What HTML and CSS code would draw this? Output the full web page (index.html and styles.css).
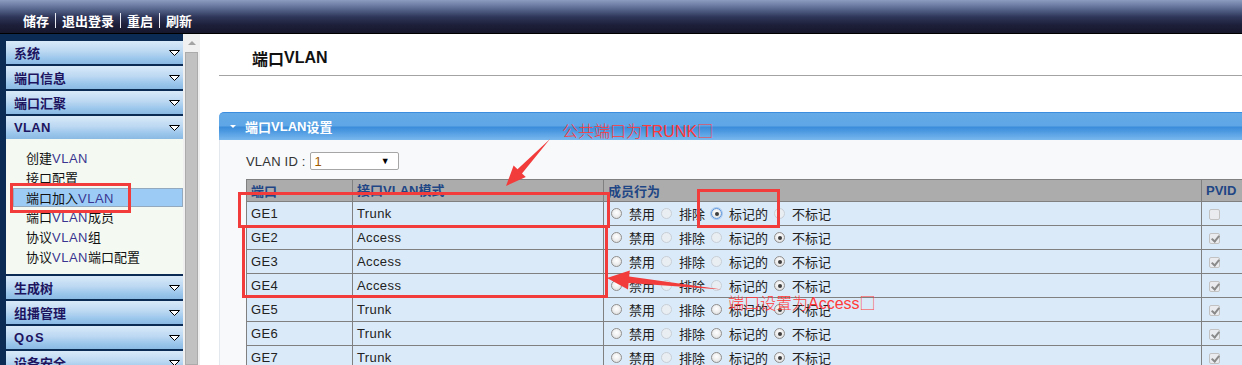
FILE: index.html
```html
<!DOCTYPE html>
<html lang="zh-CN">
<head>
<meta charset="utf-8">
<title>端口VLAN</title>
<link rel="stylesheet" href="styles.css">
</head>
<body>
<div class="page">
  <header class="topbar">
    <span class="tb-item">储存</span><span class="tb-sep"></span>
    <span class="tb-item">退出登录</span><span class="tb-sep"></span>
    <span class="tb-item">重启</span><span class="tb-sep"></span>
    <span class="tb-item">刷新</span>
  </header>
  <div class="main">
    <aside class="sidebar">
      <div class="menu-item"><span>系统</span><svg class="tri" viewBox="0 0 11 6"><path d="M0.5 0.5 H10.5 L5.5 5.5 Z" fill="#fff" stroke="#000"/></svg></div>
      <div class="menu-item"><span>端口信息</span><svg class="tri" viewBox="0 0 11 6"><path d="M0.5 0.5 H10.5 L5.5 5.5 Z" fill="#fff" stroke="#000"/></svg></div>
      <div class="menu-item"><span>端口汇聚</span><svg class="tri" viewBox="0 0 11 6"><path d="M0.5 0.5 H10.5 L5.5 5.5 Z" fill="#fff" stroke="#000"/></svg></div>
      <div class="menu-item"><span class="en-b">VLAN</span><svg class="tri" viewBox="0 0 11 6"><path d="M0.5 0.5 H10.5 L5.5 5.5 Z" fill="#fff" stroke="#000"/></svg></div>
      <div class="submenu">
        <div class="sub-item">创建<span class="en">VLAN</span></div>
        <div class="sub-item">接口配置</div>
        <div class="sub-item active">端口加入<span class="en">VLAN</span></div>
        <div class="sub-item">端口<span class="en">VLAN</span>成员</div>
        <div class="sub-item">协议<span class="en">VLAN</span>组</div>
        <div class="sub-item">协议<span class="en">VLAN</span>端口配置</div>
      </div>
      <div class="menu-item"><span>生成树</span><svg class="tri" viewBox="0 0 11 6"><path d="M0.5 0.5 H10.5 L5.5 5.5 Z" fill="#fff" stroke="#000"/></svg></div>
      <div class="menu-item"><span>组播管理</span><svg class="tri" viewBox="0 0 11 6"><path d="M0.5 0.5 H10.5 L5.5 5.5 Z" fill="#fff" stroke="#000"/></svg></div>
      <div class="menu-item"><span class="en-b qos">QoS</span><svg class="tri" viewBox="0 0 11 6"><path d="M0.5 0.5 H10.5 L5.5 5.5 Z" fill="#fff" stroke="#000"/></svg></div>
      <div class="menu-item"><span>设备安全</span><svg class="tri" viewBox="0 0 11 6"><path d="M0.5 0.5 H10.5 L5.5 5.5 Z" fill="#fff" stroke="#000"/></svg></div>
    </aside>
    <div class="scrollbar">
      <div class="sb-up"></div>
      <div class="sb-thumb"></div>
    </div>
    <section class="content">
      <h1 class="page-title">端口<span class="en-b">VLAN</span></h1>
      <div class="panel">
        <div class="panel-head"><span class="ph-tri"></span><span class="ph-title">端口<span class="en-b">VLAN</span>设置</span></div>
        <div class="panel-body">
          <div class="vlan-row">
            <span class="vlan-label">VLAN ID :</span>
            <div class="select"><span>1</span><span class="sel-arrow">▼</span></div>
          </div>
          <table class="grid">
            <thead>
              <tr><th class="c1">端口</th><th class="c2">接口<span class="en-b">VLAN</span>模式</th><th class="c3">成员行为</th><th class="c4"><span class="en-b">PVID</span></th></tr>
            </thead>
            <tbody id="rows"></tbody>
          </table>
        </div>
      </div>
    </section>
  </div>

  <div class="mark mark-menu"></div>
  <div class="mark mark-ge1"></div>
  <div class="mark mark-ge24"></div>
  <div class="mark mark-tag"></div>
  <div class="note note-trunk">公共端口为<span class="en-n">TRUNK</span>□</div>
  <div class="note note-access">端口设置为<span class="en-n">Access</span>□</div>
  <svg class="arrows" width="1242" height="365" viewBox="0 0 1242 365">
    <polygon fill="#f23c3c" points="550,139 522,173.4 525.8,177 506,186 513.6,165.6 517.5,169.2"/>
    <polygon fill="#f23c3c" points="722,289.5 629.2,276.6 629.8,270.5 607,278 628,289.5 628.6,283"/>
  </svg>
</div>
<script src="app.js"></script>
</body>
</html>
```

FILE: app.js
```js
(function () {
  var rows = [
    { port: 'GE1', mode: 'Trunk', sel: 2, tagDis: false, untagDis: true, pvid: false, focus: true },
    { port: 'GE2', mode: 'Access', sel: 3, tagDis: true, untagDis: false, pvid: true },
    { port: 'GE3', mode: 'Access', sel: 3, tagDis: true, untagDis: false, pvid: true },
    { port: 'GE4', mode: 'Access', sel: 3, tagDis: true, untagDis: false, pvid: true },
    { port: 'GE5', mode: 'Trunk', sel: 3, tagDis: false, untagDis: false, pvid: true },
    { port: 'GE6', mode: 'Trunk', sel: 3, tagDis: false, untagDis: false, pvid: true },
    { port: 'GE7', mode: 'Trunk', sel: 3, tagDis: false, untagDis: false, pvid: true }
  ];
  var labels = ['禁用', '排除', '标记的', '不标记'];
  var tb = document.getElementById('rows');
  rows.forEach(function (r) {
    var tr = document.createElement('tr');
    var html = '<td class="c1">' + r.port + '</td><td class="c2">' + r.mode + '</td><td class="c3"><div class="opts">';
    labels.forEach(function (l, i) {
      var cls = 'radio';
      if (i === 1) cls += ' dis';
      if (i === 2 && r.tagDis) cls += ' dis';
      if (i === 3 && r.untagDis) cls += ' dis';
      if (i === r.sel) cls += ' on';
      if (i === r.sel && r.focus) cls += ' focus';
      html += '<span class="opt"><span class="' + cls + '"></span><span class="opt-l">' + l + '</span></span>';
    });
    html += '</div></td><td class="c4"><span class="chk' + (r.pvid ? ' on' : '') + '"></span></td>';
    tr.innerHTML = html;
    tb.appendChild(tr);
  });
})();
```

FILE: styles.css
```css
* { box-sizing: border-box; }
html, body { margin: 0; padding: 0; }
body {
  width: 1242px;
  height: 365px;
  overflow: hidden;
  background: #fff;
  font-family: "Liberation Sans", "Noto Sans CJK SC", Arial, sans-serif;
  font-size: 13px;
  color: #222;
}
.page { position: relative; width: 1242px; height: 365px; overflow: hidden; }

/* top bar */
.topbar {
  height: 34px;
  display: flex;
  align-items: center;
  padding: 8px 0 0 23px;
  background: linear-gradient(#8c9cc0 0, #5d6d94 8px, #2e3659 17px, #1d1f3a 25px, #16172c 33px);
  border-bottom: 1px solid #000;
}
.tb-item {
  font-family: "Noto Sans CJK SC", sans-serif;
  font-weight: 700;
  font-size: 13px;
  color: #fff;
  line-height: 16px;
}
.tb-sep {
  width: 1px;
  height: 15px;
  background: #e8e8f0;
  margin: 0 6px 0 6px;
}

.main { display: flex; height: 331px; }

/* sidebar */
.sidebar {
  width: 183px;
  flex: none;
  background: #0b2b55;
  padding: 7px 0 0 6px;
  display: flex;
  flex-direction: column;
  gap: 2px;
}
.menu-item {
  height: 23px;
  flex: none;
  display: flex;
  align-items: center;
  justify-content: space-between;
  padding: 0 3px 0 8px;
  background: linear-gradient(#d9eaf9 0, #bcd8f2 45%, #9cc7ec 75%, #8ab9e3 100%);
  font-family: "Noto Sans CJK SC", sans-serif;
  font-weight: 700;
  font-size: 13px;
  color: #1d1460;
}
.menu-item .en-b { font-family: "Liberation Sans", sans-serif; font-weight: 700; letter-spacing: 0.3px; }
.menu-item .qos { letter-spacing: 1.5px; }
.tri { width: 11px; height: 6px; display: block; }
.submenu {
  height: 135px;
  flex: none;
  margin-top: -2px;
  background: #f4faf1;
  padding: 9px 0 0 0;
  display: flex;
  flex-direction: column;
}
.sub-item {
  height: 20px;
  line-height: 20px;
  padding-left: 20px;
  font-family: "Noto Sans CJK SC", sans-serif;
  font-size: 13px;
  color: #111;
}
.sub-item .en { font-family: "Liberation Sans", sans-serif; color: #3a3590; letter-spacing: 0.5px; }
.sub-item.active {
  height: 19px;
  line-height: 17px;
  margin-left: 7px;
  padding-left: 12px;
  background: #9cccf6;
  border: 1px solid #93a9be;
}

/* scrollbar */
.scrollbar {
  width: 17px;
  flex: none;
  background: #f0f0f0;
  display: flex;
  flex-direction: column;
  align-items: center;
}
.sb-up {
  margin-top: 7px;
  width: 0; height: 0;
  border-left: 4px solid transparent;
  border-right: 4px solid transparent;
  border-bottom: 4px solid #a3a3a3;
}
.sb-thumb {
  margin-top: 7px;
  width: 13px;
  flex: 1;
  background: #c1c1c1;
  border: 1px solid #ababab;
}

/* content */
.content { flex: 1; min-width: 0; overflow: hidden; }
.page-title {
  margin: 0 0 0 19px;
  height: 42px;
  padding: 12px 0 6px 33px;
  display: flex;
  align-items: center;
  border-bottom: 1px solid #a3a3a3;
  font-family: "Noto Sans CJK SC", sans-serif;
  font-size: 16px;
  line-height: 22px;
  font-weight: 700;
  color: #111;
}
.page-title .en-b { font-family: "Liberation Sans", sans-serif; }

.panel { margin: 36px 0 0 19px; width: 1080px; }
.panel-head {
  height: 28px;
  border-radius: 5px 0 0 0;
  border-top: 1px solid #3b8de0;
  background: linear-gradient(#64aae7 0, #5ea6e6 48%, #3a8cda 52%, #4f9be2 70%, #79b8ee 100%);
  display: flex;
  align-items: center;
  padding-left: 11px;
  color: #fff;
}
.ph-tri {
  width: 0; height: 0;
  border-left: 3px solid transparent;
  border-right: 3px solid transparent;
  border-top: 3px solid #fff;
  margin-right: 9px;
}
.ph-title {
  display: flex;
  align-items: center;
  height: 20px;
  font-family: "Noto Sans CJK SC", sans-serif;
  font-weight: 700;
  font-size: 13px;
}
.ph-title .en-b { font-family: "Liberation Sans", sans-serif; }
.panel-body {
  background: #f7f9fb;
  border-left: 1px solid #e3e8ee;
  padding: 12px 0 0 26px;
  height: 240px;
}
.vlan-row { display: flex; align-items: center; height: 18px; }
.vlan-label { color: #333; font-size: 13px; margin-right: 4px; letter-spacing: 0.2px; }
.select {
  width: 89px;
  height: 18px;
  background: #fff;
  border: 1px solid #a6a6a6;
  border-radius: 2px;
  display: flex;
  align-items: center;
  justify-content: space-between;
  padding: 0 8px 0 4px;
  color: #a05a00;
  font-size: 13px;
}
.sel-arrow { color: #000; font-size: 9px; }

.grid {
  margin-top: 9px;
  border-collapse: collapse;
  table-layout: fixed;
  width: 1015px;
}
.grid th, .grid td {
  border: 1px solid #808080;
  padding: 0 0 0 4px;
  text-align: left;
  white-space: nowrap;
  overflow: hidden;
}
.grid th {
  height: 22px;
  background: #acacac;
  color: #1f4685;
  font-family: "Noto Sans CJK SC", sans-serif;
  font-weight: 700;
  font-size: 13px;
  line-height: 18px;
}
.grid th .en-b { font-family: "Liberation Sans", sans-serif; }
.grid td {
  height: 24px;
  background: #dbeaf8;
  font-size: 13px;
  line-height: 18px;
  color: #222;
  letter-spacing: 0.4px;
}
.c1 { width: 106px; }
.c2 { width: 251px; }
.c3 { width: 598px; }
.c4 { width: 60px; }
.grid td.c3 { padding-left: 7px; }
.grid td.c4 { padding-left: 7px; }
.opts { display: flex; align-items: center; height: 18px; }
.opt { display: inline-flex; align-items: center; margin-right: 6px; }
.opt-l {
  font-family: "Noto Sans CJK SC", sans-serif;
  font-size: 13px;
  line-height: 18px;
  color: #222;
  letter-spacing: 0;
  margin-left: 7px;
}
.radio {
  width: 11px; height: 11px;
  border-radius: 50%;
  border: 1px solid #8f8f8f;
  background: radial-gradient(circle at 50% 40%, #ffffff 0, #f2f2f2 40%, #d8d8d8 100%);
  display: inline-flex;
  align-items: center;
  justify-content: center;
}
.radio.dis { border-color: #c7ced6; background: #e9eef3; }
.radio.on::after {
  content: "";
  width: 4px; height: 4px;
  border-radius: 50%;
  background: #3d3d3d;
}
.radio.focus { border-color: #5b95dd; box-shadow: 0 0 0 1px #a9c8ef; }
.chk {
  display: inline-block;
  width: 11px; height: 11px;
  border: 1px solid #c2c2c2;
  border-radius: 2px;
  background: #e9ebee;
  position: relative;
  vertical-align: middle;
}
.chk.on::after {
  content: "";
  position: absolute;
  left: 3px; top: 0px;
  width: 3px; height: 6px;
  border-right: 2px solid #8a8a8a;
  border-bottom: 2px solid #8a8a8a;
  transform: rotate(40deg);
}

/* annotations (overlay) */
.mark { position: absolute; border: 3px solid #f23c3c; }
.mark-menu { left: 10px; top: 183px; width: 121px; height: 30px; }
.mark-ge1 { left: 238px; top: 192px; width: 372px; height: 36px; }
.mark-ge24 { left: 242px; top: 225px; width: 366px; height: 73px; }
.mark-tag { left: 697px; top: 189px; width: 83px; height: 39px; }
.note {
  position: absolute;
  font-family: "Noto Sans CJK SC", sans-serif;
  font-size: 16px;
  font-weight: 300;
  line-height: 20px;
  color: #ff3a3a;
  white-space: nowrap;
}
.note .en-n { font-family: "Liberation Sans", sans-serif; }
.note-trunk { left: 562px; top: 120px; }
.note-access { left: 728px; top: 292px; }
.arrows { position: absolute; left: 0; top: 0; pointer-events: none; }
```
